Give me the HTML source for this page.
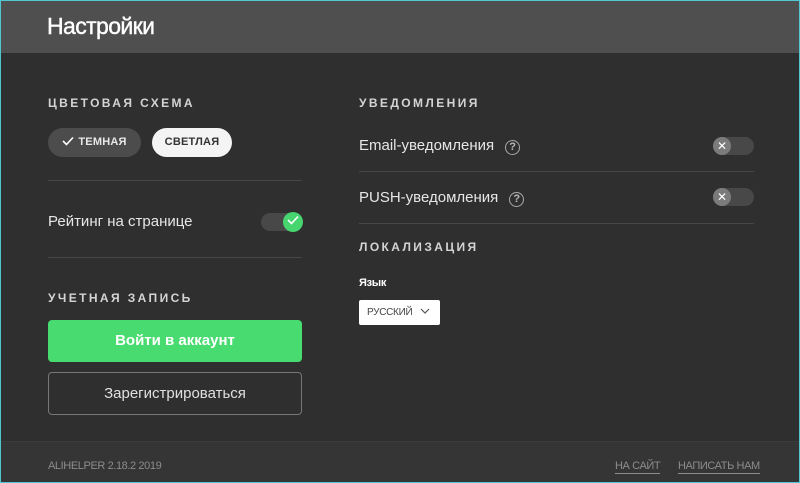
<!DOCTYPE html>
<html><head><meta charset="utf-8"><style>
*{box-sizing:border-box;margin:0;padding:0}
body{width:800px;height:483px;overflow:hidden;background:#2f2f2f;font-family:"Liberation Sans",sans-serif;position:relative}
.frame{position:absolute;inset:0;border:1px solid #4fc6d0;z-index:10;pointer-events:none}
.hdr{position:absolute;left:0;top:0;width:800px;height:53px;background:#4f4f4f}
.hdr h1{position:absolute;left:47px;top:13px;font-size:23px;font-weight:normal;color:#fff;letter-spacing:-0.6px;-webkit-text-stroke:0.4px #fff}
.sec{position:absolute;font-size:12px;font-weight:bold;letter-spacing:2.4px;color:#d4d4d4}
.pill{position:absolute;height:29px;border-radius:15px;font-size:11px;font-weight:bold;line-height:29px;text-align:center;letter-spacing:0.2px}
.line{position:absolute;height:1px;background:#474747}
.txt{position:absolute;font-size:15px;color:#e6e6e6}
.q{display:inline-block;width:15px;height:15px;border:1.5px solid #aaa;border-radius:50%;font-size:11px;line-height:12px;text-align:center;color:#bbb;font-weight:bold;margin-left:11px;vertical-align:0px}
.tg{position:absolute;width:41px;height:18px;border-radius:9px;background:#484848}
.kn{position:absolute;top:0;width:18px;height:18px;border-radius:50%;background:#7b7b7b;color:#fff;font-size:12px;line-height:18px;text-align:center}
.foot{position:absolute;left:0;top:441px;width:800px;height:42px;background:#353535;border-top:1px solid #3c3c3c}
.ft{position:absolute;font-size:11px;color:#8c8c8c;top:18px;letter-spacing:-0.4px}
.ft u{text-decoration:none;border-bottom:1px solid #8c8c8c;padding-bottom:1px}
</style></head><body>
<div class="frame"></div>
<div class="hdr"><h1>Настройки</h1></div>

<div class="sec" style="left:48px;top:96px">ЦВЕТОВАЯ СХЕМА</div>
<div class="pill" style="left:48px;top:128px;width:93px;background:#4c4c4c;color:#e8e8e8">
<svg width="12" height="10" viewBox="0 0 12 10" style="vertical-align:-1px;margin-right:4px"><path d="M1 5l3.5 3.5L11 1.5" stroke="#fff" stroke-width="1.6" fill="none"/></svg>ТЕМНАЯ</div>
<div class="pill" style="left:152px;top:128px;width:80px;background:#f4f4f4;color:#333">СВЕТЛАЯ</div>
<div class="line" style="left:48px;top:180px;width:254px"></div>
<div class="txt" style="left:48px;top:213px">Рейтинг на странице</div>
<div class="tg" style="left:261px;top:213px"><div class="kn" style="left:22px;top:-1px;width:20px;height:20px;background:#46d56e"><svg width="12" height="10" viewBox="0 0 12 10"><path d="M1 5l3.5 3.5L11 1.5" stroke="#fff" stroke-width="1.6" fill="none"/></svg></div></div>
<div class="line" style="left:48px;top:257px;width:254px"></div>
<div class="sec" style="left:48px;top:291px">УЧЕТНАЯ ЗАПИСЬ</div>
<div style="position:absolute;left:48px;top:320px;width:254px;height:42px;border-radius:4px;background:#48dc70;color:#fff;font-weight:bold;font-size:15px;line-height:42px;text-align:center">Войти в аккаунт</div>
<div style="position:absolute;left:48px;top:372px;width:254px;height:43px;border-radius:4px;border:1px solid #777;color:#e0e0e0;font-size:15px;line-height:41px;text-align:center">Зарегистрироваться</div>

<div class="sec" style="left:359px;top:96px">УВЕДОМЛЕНИЯ</div>
<div class="txt" style="left:359px;top:137px">Email-уведомления<span class="q">?</span></div>
<div class="tg" style="left:713px;top:137px"><div class="kn" style="left:0">✕</div></div>
<div class="line" style="left:359px;top:171px;width:395px"></div>
<div class="txt" style="left:359px;top:189px">PUSH-уведомления<span class="q">?</span></div>
<div class="tg" style="left:713px;top:188px"><div class="kn" style="left:0">✕</div></div>
<div class="line" style="left:359px;top:223px;width:395px"></div>
<div class="sec" style="left:359px;top:240px">ЛОКАЛИЗАЦИЯ</div>
<div style="position:absolute;left:359px;top:277px;font-size:11px;font-weight:bold;color:#fff;letter-spacing:-0.3px">Язык</div>
<div style="position:absolute;left:359px;top:300px;width:81px;height:25px;background:#fff;border-radius:2px;font-size:10px;color:#444;line-height:25px;padding-left:8px;letter-spacing:-0.3px">РУССКИЙ
<svg width="10" height="6" viewBox="0 0 10 6" style="margin-left:5px;vertical-align:1px"><path d="M1 1l4 4 4-4" stroke="#555" stroke-width="1.2" fill="none"/></svg></div>

<div class="foot">
<div class="ft" style="left:48px">ALIHELPER 2.18.2 2019</div>
<div class="ft" style="left:615px"><u>НА САЙТ</u></div>
<div class="ft" style="left:678px"><u>НАПИСАТЬ НАМ</u></div>
</div>
</body></html>
